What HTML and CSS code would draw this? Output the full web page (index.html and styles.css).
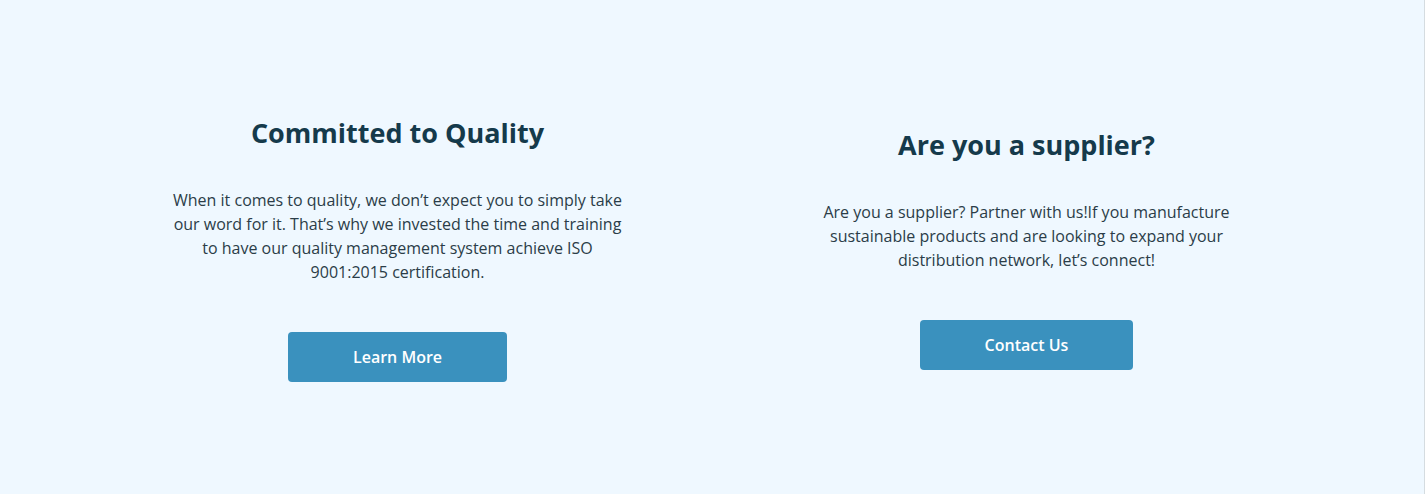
FILE: index.html
```html
<!DOCTYPE html>
<html lang="en">
<head>
<meta charset="utf-8">
<title>Quality &amp; Suppliers</title>
<link rel="stylesheet" href="styles.css">
</head>
<body>
<section class="section">
  <div class="grid">
    <div class="col">
      <h2 class="title">Committed to Quality</h2>
      <p class="text">When it comes to quality, we don’t expect you to simply take our word for it. That’s why we invested the time and training to have our quality management system achieve ISO 9001:2015 certification.</p>
      <a class="btn" href="#">Learn More</a>
    </div>
    <div class="col">
      <h2 class="title">Are you a supplier?</h2>
      <p class="text">Are you a supplier? Partner with us!If you manufacture sustainable products and are looking to expand your distribution network, let’s connect!</p>
      <a class="btn" href="#">Contact Us</a>
    </div>
  </div>
</section>
</body>
</html>
```
FILE: styles.css
```css
html, body {
  margin: 0;
  padding: 0;
}
body {
  background: #eff8ff;
  font-family: "Open Sans", "Noto Sans", sans-serif;
}
.section {
  box-sizing: border-box;
  height: 494px;
  border-right: 1px solid #d5dce0;
  display: flex;
  align-items: center;
  justify-content: center;
  padding-top: 2px;
}
.grid {
  width: 1258px;
  display: grid;
  grid-template-columns: 1fr 1fr;
  align-items: center;
}
.col {
  display: flex;
  flex-direction: column;
  align-items: center;
  text-align: center;
}
.title {
  margin: 0 0 37px;
  font-size: 27px;
  line-height: 36px;
  font-weight: 700;
  color: #153a4b;
}
.text {
  margin: 0 0 48px;
  max-width: 460px;
  font-size: 16px;
  line-height: 24px;
  color: #2b3d48;
}
.btn {
  display: inline-block;
  padding: 13px 65px;
  line-height: 24px;
  font-size: 16px;
  font-weight: 600;
  color: #ffffff;
  background: #3a91be;
  border-radius: 4px;
  text-decoration: none;
}
```
